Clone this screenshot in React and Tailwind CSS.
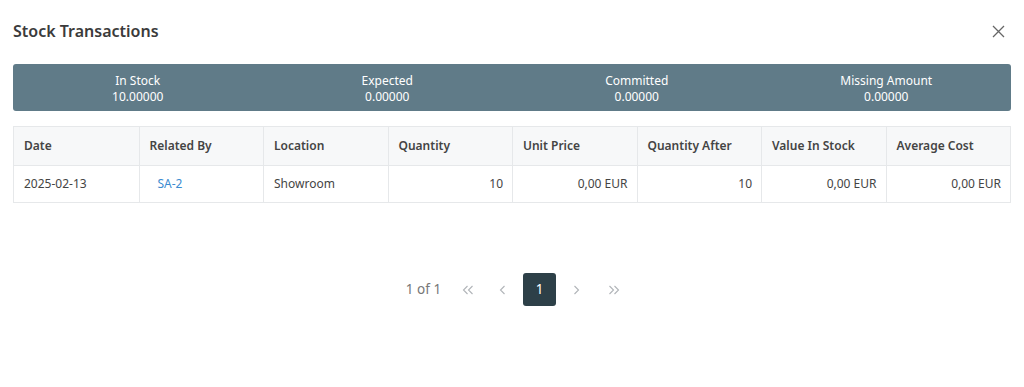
import React from "react";

const font = { fontFamily: '"Segoe UI", "Noto Sans", "Open Sans", sans-serif' };

const headers = ["Date", "Related By", "Location", "Quantity", "Unit Price", "Quantity After", "Value In Stock", "Average Cost"];

const Chev = ({ dir = "left", double = false }) => {
  const w = double ? 12 : 7;
  const one = (x) =>
    dir === "left" ? `M${x + 4.5} 1L${x + 0.5} 5L${x + 4.5} 9` : `M${x + 0.5} 1L${x + 4.5} 5L${x + 0.5} 9`;
  return (
    <svg width={w} height="10" viewBox={`0 0 ${w} 10`} fill="none" stroke="#b0b4b8" strokeWidth="1.1">
      <path d={one(1)} />
      {double && <path d={one(6)} />}
    </svg>
  );
};

export default function App() {
  return (
    <div className="w-[1024px] h-[387px] bg-white text-[#444]" style={font}>
      <div className="flex items-center justify-between pl-[13px] pr-[19px] pt-[16px] h-[46px]">
        <h2 className="text-[16px] font-semibold text-[#3b3b3b]">Stock Transactions</h2>
        <svg width="13" height="13" viewBox="0 0 13 13" className="text-[#666]">
          <path d="M1 1L12 12M12 1L1 12" stroke="currentColor" strokeWidth="1.3" />
        </svg>
      </div>
      <div className="mx-[13px] mt-[18px] h-[47px] rounded-[3px] bg-[#607b88] grid grid-cols-4 text-white text-[12px] leading-[16px]">
        {[["In Stock", "10.00000"], ["Expected", "0.00000"], ["Committed", "0.00000"], ["Missing Amount", "0.00000"]].map(([l, v]) => (
          <div key={l} className="flex flex-col items-center justify-center pt-[2px]">
            <span>{l}</span>
            <span>{v}</span>
          </div>
        ))}
      </div>
      <div className="mx-[13px] mt-[15px] border border-[#e6e8ea]">
        <div className="grid grid-cols-8 bg-[#f7f8f9] h-[38px] text-[12px] font-semibold text-[#444]">
          {headers.map((h, i) => (
            <div key={h} className={`flex items-center pl-[10px] ${i > 0 ? "border-l border-[#e6e8ea]" : ""}`}>{h}</div>
          ))}
        </div>
        <div className="grid grid-cols-8 h-[37px] text-[12px] text-[#444] border-t border-[#e6e8ea]">
          <div className="flex items-center pl-[10px]">2025-02-13</div>
          <div className="flex items-center pl-[18px] border-l border-[#e6e8ea] text-[#3b8bd0]">SA-2</div>
          <div className="flex items-center pl-[10px] border-l border-[#e6e8ea]">Showroom</div>
          <div className="flex items-center justify-end pr-[9px] border-l border-[#e6e8ea]">10</div>
          <div className="flex items-center justify-end pr-[9px] border-l border-[#e6e8ea]">0,00 EUR</div>
          <div className="flex items-center justify-end pr-[9px] border-l border-[#e6e8ea]">10</div>
          <div className="flex items-center justify-end pr-[9px] border-l border-[#e6e8ea]">0,00 EUR</div>
          <div className="flex items-center justify-end pr-[9px] border-l border-[#e6e8ea]">0,00 EUR</div>
        </div>
      </div>
      <div className="flex items-center justify-center mt-[70px] text-[13.5px] text-[#777] pl-[2px]">
        <span className="mr-[21px]">1 of 1</span>
        <span className="w-[12px] flex justify-center"><Chev dir="left" double /></span>
        <span className="ml-[25px] w-[7px] flex justify-center"><Chev dir="left" /></span>
        <span className="ml-[17px] w-[33px] h-[33px] rounded-[3px] bg-[#2d4048] text-white flex items-center justify-center">1</span>
        <span className="ml-[17px] w-[7px] flex justify-center"><Chev dir="right" /></span>
        <span className="ml-[28px] w-[12px] flex justify-center"><Chev dir="right" double /></span>
      </div>
    </div>
  );
}
